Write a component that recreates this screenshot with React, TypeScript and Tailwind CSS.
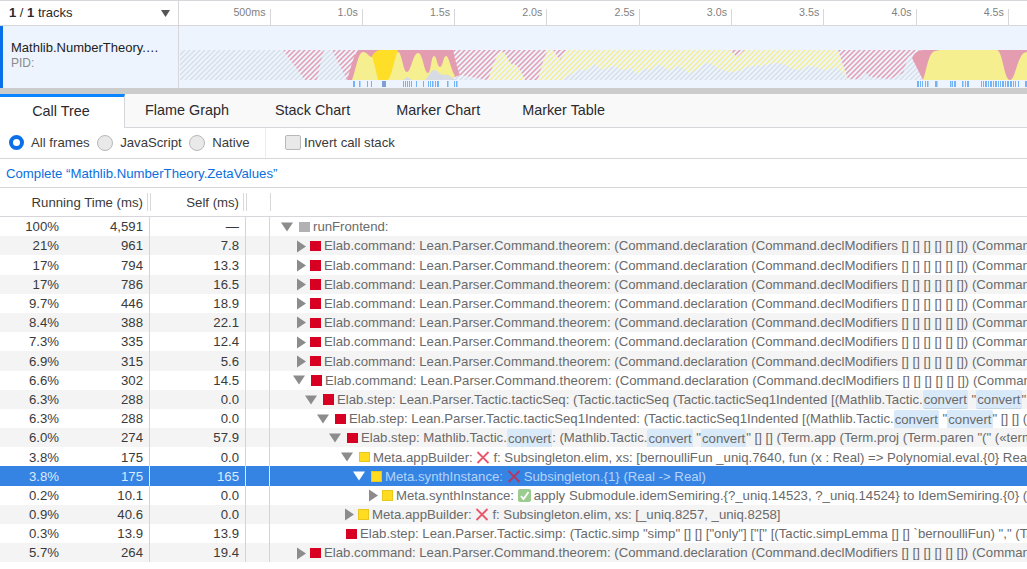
import type { ReactNode } from 'react';

// ── Track graph data ──────────────────────────────────────────────────────────

type Pt = [number, number];

// Rounded outline through midpoints, keeps the activity graph from looking polygonal.
function smooth(pts: Pt[]): string {
  let d = `M${pts[0][0]} ${pts[0][1]}`;
  for (let i = 1; i < pts.length - 1; i++) {
    const mx = (pts[i][0] + pts[i + 1][0]) / 2;
    const my = (pts[i][1] + pts[i + 1][1]) / 2;
    d += ` Q${pts[i][0]} ${pts[i][1]} ${mx} ${my}`;
  }
  const last = pts[pts.length - 1];
  return `${d} L${last[0]} ${last[1]}`;
}

const GRAY_EDGE: Pt[] = [
  [562, 80], [580, 68], [584, 72], [595, 62], [602, 72], [613, 64], [623, 72], [630, 66], [637, 75],
  [647, 67], [650, 72], [657, 62], [670, 72], [680, 64], [688, 75], [697, 69], [708, 61], [720, 70],
  [737, 73], [747, 66], [760, 66], [773, 63], [783, 63], [797, 72], [810, 64], [827, 72], [838, 64], [848, 80],
];

const TICKS: [number, number][] = [
  [353, 2], [359, 1.5], [367, 1], [371, 1], [403, 1], [405, 1], [407, 1], [409, 1], [411, 1], [416, 1], [423, 1],
  [428, 1], [430, 1], [432, 1.5], [435, 1], [437, 2], [447, 1.5], [454, 1], [456, 1.5],
  [917, 2], [920, 1], [922, 1], [925, 1], [927, 1.5], [935, 2.5], [950, 1.5], [952, 1], [954, 2], [962, 1.5], [965, 1], [967, 2],
  [981, 1], [983, 1], [985, 2], [988, 1], [990, 2], [993, 1], [995, 2], [998, 1], [1000, 1], [1002, 2], [1005, 1], [1007, 2],
  [1010, 2], [1013, 1], [1015, 1], [1018, 1], [1025, 2],
];

const TIME_LABELS = ['1.0s', '1.5s', '2.0s', '2.5s', '3.0s', '3.5s', '4.0s', '4.5s'];

// 5px tile so the diagonal stripes land on whole pixels.
function Hatch({ id, color }: { id: string; color: string }) {
  return (
    <pattern id={id} x="0" y="0" width="5" height="5" patternUnits="userSpaceOnUse">
      <rect width="5" height="5" fill="#edf4fd" />
      <path d="M-1 6 L6 -1 M-1 1 L1 -1 M4 6 L6 4" stroke={color} strokeWidth="1.5" fill="none" />
    </pattern>
  );
}

function ActivityGraph() {
  return (
    <svg className="block w-[848px] h-[61px]" viewBox="179 26 848 61">
      <defs>
        <Hatch id="hGray" color="#d7dfea" />
        <Hatch id="hRed" color="#e39cb0" />
        <Hatch id="hYellow" color="#f5ef8f" />
      </defs>

      <rect x="180" y="50" width="847" height="30" fill="url(#hGray)" />

      {/* hatched = outside the selected range */}
      <path d="M283 50 L305 80 H317 C319 70 321 60 324 50 Z" fill="url(#hRed)" />
      <path d="M332 50 L347 80 H355 V50 Z" fill="url(#hRed)" />
      <path d="M450 50 H548 L538 80 H487 L467 76 L460 75 Z" fill="url(#hRed)" />
      <path d="M488 80 C492 70 496 52 502 52 C507 52 508 63 512 64 C516 63 520 68 525 80 Z" fill="url(#hYellow)" />
      <path d={`${smooth([[538, 80], [543, 60], [548, 50]])} H838 ${smooth(GRAY_EDGE.slice().reverse()).replace('M', 'L')} Z`} fill="url(#hYellow)" />
      <path d="M553 50 L560 60 L567 50 Z" fill="url(#hRed)" />
      <path d="M730 50 L737 57 L745 50 Z" fill="url(#hRed)" />
      <path d="M838 50 L848 79 H860 L865 72 L870 77 L890 79 L903 73 L908 57 L920 50 Z" fill="url(#hRed)" />

      {/* solid = selected call node range */}
      <path d="M347 80 C350 72 353 56 358 50 H453 C455 60 458 70 460 75 L455 77 L390 80 Z" fill="#e39cb0" />
      <path d="M352 80 C356 70 358 52 363 52 C367 52 369 57 372 57 L398 52 C402 52 403 72 407 72 C411 72 413 53 418 53 C423 53 424 73 428 73 C431 73 431 56 434 56 C437 56 437 67 440 67 C443 67 443 56 446 56 C449 56 451 70 455 76 L450 80 Z" fill="#f5ef8f" />
      <path d="M372 56 C375 51 378 50 382 50 H398 C394 60 392 75 388 80 H378 C376 72 374 62 372 56 Z" fill="#ffde27" />
      <path d="M425 80 C429 76 431 70 434 70 C438 70 440 75 443 75 C446 75 448 74 451 77 L457 80 Z" fill="#d7dbe3" />
      <path d="M403 80 L407 77 L412 80 Z" fill="#d7dbe3" />

      <path d="M912 58 C915 51 920 50 925 50 H1027 V80 H923 C920 74 916 66 912 58 Z" fill="#e39cb0" />
      <path d="M923 80 C927 70 928 53 935 51 L940 50 H997 C1003 52 1004 80 1010 80 C1016 80 1017 52 1027 52 V80 Z" fill="#f5ef8f" />

      {TICKS.map(([x, w]) => (
        <rect key={x} x={x} y="81" width={w} height="6" fill="#74b3f6" />
      ))}
      <rect x="382" y="81" width="4" height="6" fill="#7d9fd4" />
    </svg>
  );
}

// ── Tree bits ─────────────────────────────────────────────────────────────────

function Hl({ children }: { children: ReactNode }) {
  return <span className="bg-[#d8e9f9] rounded-[2px] py-[1.5px] px-[1px] shadow-[0_1px_0_#c4d5e6]">{children}</span>;
}

function Cross({ dark }: { dark?: boolean }) {
  return (
    <svg className="inline-block align-[-2px] w-[14px] h-[13px] mr-[3px]" viewBox="0 0 14 13">
      <path d="M1.5 1 L12.5 12 M12.5 1 L1.5 12" stroke={dark ? '#b5375f' : '#e8576c'} strokeWidth="1.8" fill="none" />
    </svg>
  );
}

function Check() {
  return (
    <svg className="inline-block align-[-2px] w-[13px] h-[13px] mr-[3px]" viewBox="0 0 13 13">
      <rect width="13" height="13" rx="2" fill="#9ccb8f" />
      <path d="M3 7 L5.5 10 L10.5 3" stroke="#fff" strokeWidth="1.8" fill="none" />
    </svg>
  );
}

const ELAB_CMD =
  'Elab.command: Lean.Parser.Command.theorem: (Command.declaration (Command.declModifiers [] [] [] [] [] []) (Command.theorem "theorem" (Command.declId';

type Toggle = 'open' | 'closed' | 'none';
type Cat = 'red' | 'yellow' | 'gray';

interface RowData {
  pct: string;
  ms: string;
  self: string;
  depth: number;
  toggle: Toggle;
  cat: Cat;
  text: ReactNode;
}

const ROWS: RowData[] = [
  { pct: '100%', ms: '4,591', self: '—', depth: 0, toggle: 'open', cat: 'gray', text: 'runFrontend:' },
  { pct: '21%', ms: '961', self: '7.8', depth: 1, toggle: 'closed', cat: 'red', text: ELAB_CMD },
  { pct: '17%', ms: '794', self: '13.3', depth: 1, toggle: 'closed', cat: 'red', text: ELAB_CMD },
  { pct: '17%', ms: '786', self: '16.5', depth: 1, toggle: 'closed', cat: 'red', text: ELAB_CMD },
  { pct: '9.7%', ms: '446', self: '18.9', depth: 1, toggle: 'closed', cat: 'red', text: ELAB_CMD },
  { pct: '8.4%', ms: '388', self: '22.1', depth: 1, toggle: 'closed', cat: 'red', text: ELAB_CMD },
  { pct: '7.3%', ms: '335', self: '12.4', depth: 1, toggle: 'closed', cat: 'red', text: ELAB_CMD },
  { pct: '6.9%', ms: '315', self: '5.6', depth: 1, toggle: 'closed', cat: 'red', text: ELAB_CMD },
  { pct: '6.6%', ms: '302', self: '14.5', depth: 1, toggle: 'open', cat: 'red', text: ELAB_CMD },
  {
    pct: '6.3%', ms: '288', self: '0.0', depth: 2, toggle: 'open', cat: 'red',
    text: (
      <>
        Elab.step: Lean.Parser.Tactic.tacticSeq: (Tactic.tacticSeq (Tactic.tacticSeq1Indented [(Mathlib.Tactic.
        <Hl>convert</Hl> "<Hl>convert</Hl>" [] [] (Term.app (Term.proj
      </>
    ),
  },
  {
    pct: '6.3%', ms: '288', self: '0.0', depth: 3, toggle: 'open', cat: 'red',
    text: (
      <>
        Elab.step: Lean.Parser.Tactic.tacticSeq1Indented: (Tactic.tacticSeq1Indented [(Mathlib.Tactic.
        <Hl>convert</Hl> "<Hl>convert</Hl>" [] [] (Term.app (Term.proj
      </>
    ),
  },
  {
    pct: '6.0%', ms: '274', self: '57.9', depth: 4, toggle: 'open', cat: 'red',
    text: (
      <>
        Elab.step: Mathlib.Tactic.<Hl>convert</Hl>: (Mathlib.Tactic.<Hl>convert</Hl> "<Hl>convert</Hl>" [] [] (Term.app
        (Term.proj (Term.paren "(" («term_=_» (Term.app
      </>
    ),
  },
  {
    pct: '3.8%', ms: '175', self: '0.0', depth: 5, toggle: 'open', cat: 'yellow',
    text: (
      <>
        Meta.appBuilder: <Cross />f: Subsingleton.elim, xs: [bernoulliFun _uniq.7640, fun (x : Real) =&gt;
        Polynomial.eval.{'{0}'} Real _inst
      </>
    ),
  },
  {
    pct: '3.8%', ms: '175', self: '165', depth: 6, toggle: 'open', cat: 'yellow',
    text: (
      <>
        Meta.synthInstance: <Cross dark />Subsingleton.{'{1}'} (Real -&gt; Real)
      </>
    ),
  },
  {
    pct: '0.2%', ms: '10.1', self: '0.0', depth: 7, toggle: 'closed', cat: 'yellow',
    text: (
      <>
        Meta.synthInstance: <Check />apply Submodule.idemSemiring.{'{?_uniq.14523, ?_uniq.14524}'} to
        IdemSemiring.{'{0}'} (Submodule)
      </>
    ),
  },
  {
    pct: '0.9%', ms: '40.6', self: '0.0', depth: 5, toggle: 'closed', cat: 'yellow',
    text: (
      <>
        Meta.appBuilder: <Cross />f: Subsingleton.elim, xs: [_uniq.8257, _uniq.8258]
      </>
    ),
  },
  {
    pct: '0.3%', ms: '13.9', self: '13.9', depth: 4, toggle: 'none', cat: 'red',
    text: 'Elab.step: Lean.Parser.Tactic.simp: (Tactic.simp "simp" [] [] ["only"] ["[" [(Tactic.simpLemma [] [] `bernoulliFun) "," (Tactic.simpLemma',
  },
  { pct: '5.7%', ms: '264', self: '19.4', depth: 1, toggle: 'closed', cat: 'red', text: ELAB_CMD },
];

const CAT_CLASS: Record<Cat, string> = {
  red: 'bg-[#d70022]',
  yellow: 'bg-[#ffdc1f] border border-[#e8c81c]',
  gray: 'bg-[#b1b1b3]',
};

function TreeRow({ row, index }: { row: RowData; index: number }) {
  const selected = index === 13;
  const bg = selected ? 'bg-[#3584e4]' : index % 2 === 1 ? 'bg-[#f4f4f4]' : 'bg-white';
  const num = selected ? 'text-[#dcebfc]' : 'text-[#3a3a3a]';
  const line = selected ? 'border-[#dfeafa]' : 'border-[#d4d4d4]';
  const triColor = selected ? '#ffffff' : '#8c8c8c';
  const name = selected ? 'text-[#b4d3f8]' : 'text-[#6a6a6a]';

  return (
    <div className={`flex h-[19.2px] leading-[19.2px] text-[13.2px] ${bg}`}>
      <div className={`w-[59px] shrink-0 text-right pt-[0.3px] ${num}`}>{row.pct}</div>
      <div className={`w-[91px] shrink-0 text-right pt-[0.3px] pr-[6px] border-r ${line} ${num}`}>{row.ms}</div>
      <div className={`w-[96px] shrink-0 text-right pt-[0.3px] pr-[6px] border-r ${line} ${num}`}>{row.self}</div>
      <div className={`w-[24px] shrink-0 border-r ${line}`} />
      <div
        className={`flex-1 min-w-0 flex items-center overflow-hidden whitespace-nowrap pt-[0.6px] ${name}`}
        style={{ paddingLeft: 11 + row.depth * 12 }}
      >
        {row.toggle === 'open' && (
          <svg className="w-[18px] h-[10px] shrink-0" viewBox="0 0 18 10">
            <path d="M0 0.5 H12 L6 9.5 Z" fill={triColor} />
          </svg>
        )}
        {row.toggle === 'closed' && (
          <svg className="w-[17px] h-[13px] shrink-0" viewBox="0 0 17 13">
            <path d="M4 0.5 L13 6.5 L4 12.5 Z" fill={triColor} />
          </svg>
        )}
        {row.toggle === 'none' && <span className="w-[17px] shrink-0" />}
        <span className={`w-[10.5px] h-[10.5px] shrink-0 mr-[3.5px] ${CAT_CLASS[row.cat]}`} />
        <span>{row.text}</span>
      </div>
    </div>
  );
}

// ── Chrome ────────────────────────────────────────────────────────────────────

function Radio({ label, on }: { label: string; on?: boolean }) {
  return (
    <label className="flex items-center gap-[7px] text-[#3a3a3a]">
      {on ? (
        <span className="w-[15px] h-[15px] rounded-full border-[4.5px] border-[#0a6fe8] bg-white" />
      ) : (
        <span className="w-[16px] h-[16px] rounded-full border border-[#b8b8b8] bg-[#e9e9ea]" />
      )}
      {label}
    </label>
  );
}

function Handle({ className }: { className: string }) {
  return <span className={`shrink-0 h-[18px] border-l border-[#d8d8d8] ${className}`} />;
}

const TABS = ['Flame Graph', 'Stack Chart', 'Marker Chart'];

export default function App() {
  return (
    <div className="w-[1027px] h-[569px] overflow-hidden bg-white font-['Liberation_Sans',sans-serif] text-[13px] text-[#2a2a2e]">
      {/* Timeline */}
      <div className="flex h-[26px] border-y border-[#d7d7db]">
        <div className="w-[179px] shrink-0 flex items-center justify-between pl-[9px] pr-[8px] border-r border-[#d7d7db]">
          <span className="text-[13px]">
            <b>1</b> / <b>1</b> tracks
          </span>
          <svg className="w-[9px] h-[7px]" viewBox="0 0 9 7">
            <path d="M0 0 H9 L4.5 7 Z" fill="#555" />
          </svg>
        </div>
        <div className="flex flex-1 items-end overflow-hidden text-[10.7px] text-[#7f7f7f]">
          <div className="w-[91.5px] shrink-0 h-[16px] leading-[6px] text-right pr-[4px] border-r border-[#d7d7db]">500ms</div>
          {TIME_LABELS.map((t) => (
            <div key={t} className="w-[92.3px] shrink-0 h-[16px] leading-[6px] text-right pr-[4px] border-r border-[#d7d7db]">
              {t}
            </div>
          ))}
        </div>
      </div>

      <div className="flex h-[62px] bg-[#edf4fd]">
        <div className="w-[179px] shrink-0 flex flex-col border-l-[3px] border-l-[#0a6fe8] border-r border-r-[#d7d7db] pl-[8px] pt-[14px]">
          <span className="text-[13px] leading-[16px] text-[#222]">Mathlib.NumberTheory.…</span>
          <span className="text-[12px] leading-[14px] text-[#8a8a8a]">PID:</span>
        </div>
        <ActivityGraph />
      </div>

      <div className="h-[6px] bg-[#cccccc]" />

      {/* Tabs */}
      <div className="flex h-[34px] bg-[#f9f9fa]">
        <div className="w-[125px] shrink-0 text-center pr-[2px] bg-white border-t-[3px] border-t-[#0a84ff] border-r border-r-[#d7d7db] text-[14.4px] leading-[28px]">
          Call Tree
        </div>
        <div className="flex flex-1 gap-[46px] pl-[20px] border-b border-[#d7d7db] text-[14.4px] leading-[33px]">
          {TABS.map((t) => (
            <span key={t}>{t}</span>
          ))}
          <span className="-ml-[4px]">Marker Table</span>
        </div>
      </div>

      {/* Settings */}
      <div className="flex h-[31px] items-center border-b border-[#d7d7db] text-[13.2px]">
        <div className="flex items-center h-full w-[266px] shrink-0 pl-[9px] gap-[7.5px] border-r border-[#ededf0]">
          <Radio label="All frames" on />
          <Radio label="JavaScript" />
          <Radio label="Native" />
        </div>
        <label className="flex items-center gap-[3px] pl-[19px] text-[#3a3a3a]">
          <span className="w-[16px] h-[15px] rounded-[2px] border border-[#b8b8b8] bg-[#e9e9ea]" />
          Invert call stack
        </label>
      </div>

      {/* Breadcrumb */}
      <div className="h-[29px] pl-[6px] leading-[29px] border-b border-[#d7d7db] text-[13.2px] text-[#0a6fe0]">
        Complete “Mathlib.NumberTheory.ZetaValues”
      </div>

      {/* Header */}
      <div className="flex h-[29px] items-center border-b border-[#d7d7db] text-[13.2px] leading-[31px] text-[#3a3a3a]">
        <span className="w-[143px] shrink-0 text-right">Running Time (ms)</span>
        <Handle className="ml-[4px]" />
        <Handle className="ml-[2px]" />
        <span className="w-[88px] shrink-0 text-right">Self (ms)</span>
        <Handle className="ml-[4px]" />
        <Handle className="ml-[2px]" />
        <Handle className="ml-[23px]" />
      </div>

      {/* Tree */}
      <div>
        {ROWS.map((row, i) => (
          <TreeRow key={i} row={row} index={i} />
        ))}
      </div>
    </div>
  );
}
